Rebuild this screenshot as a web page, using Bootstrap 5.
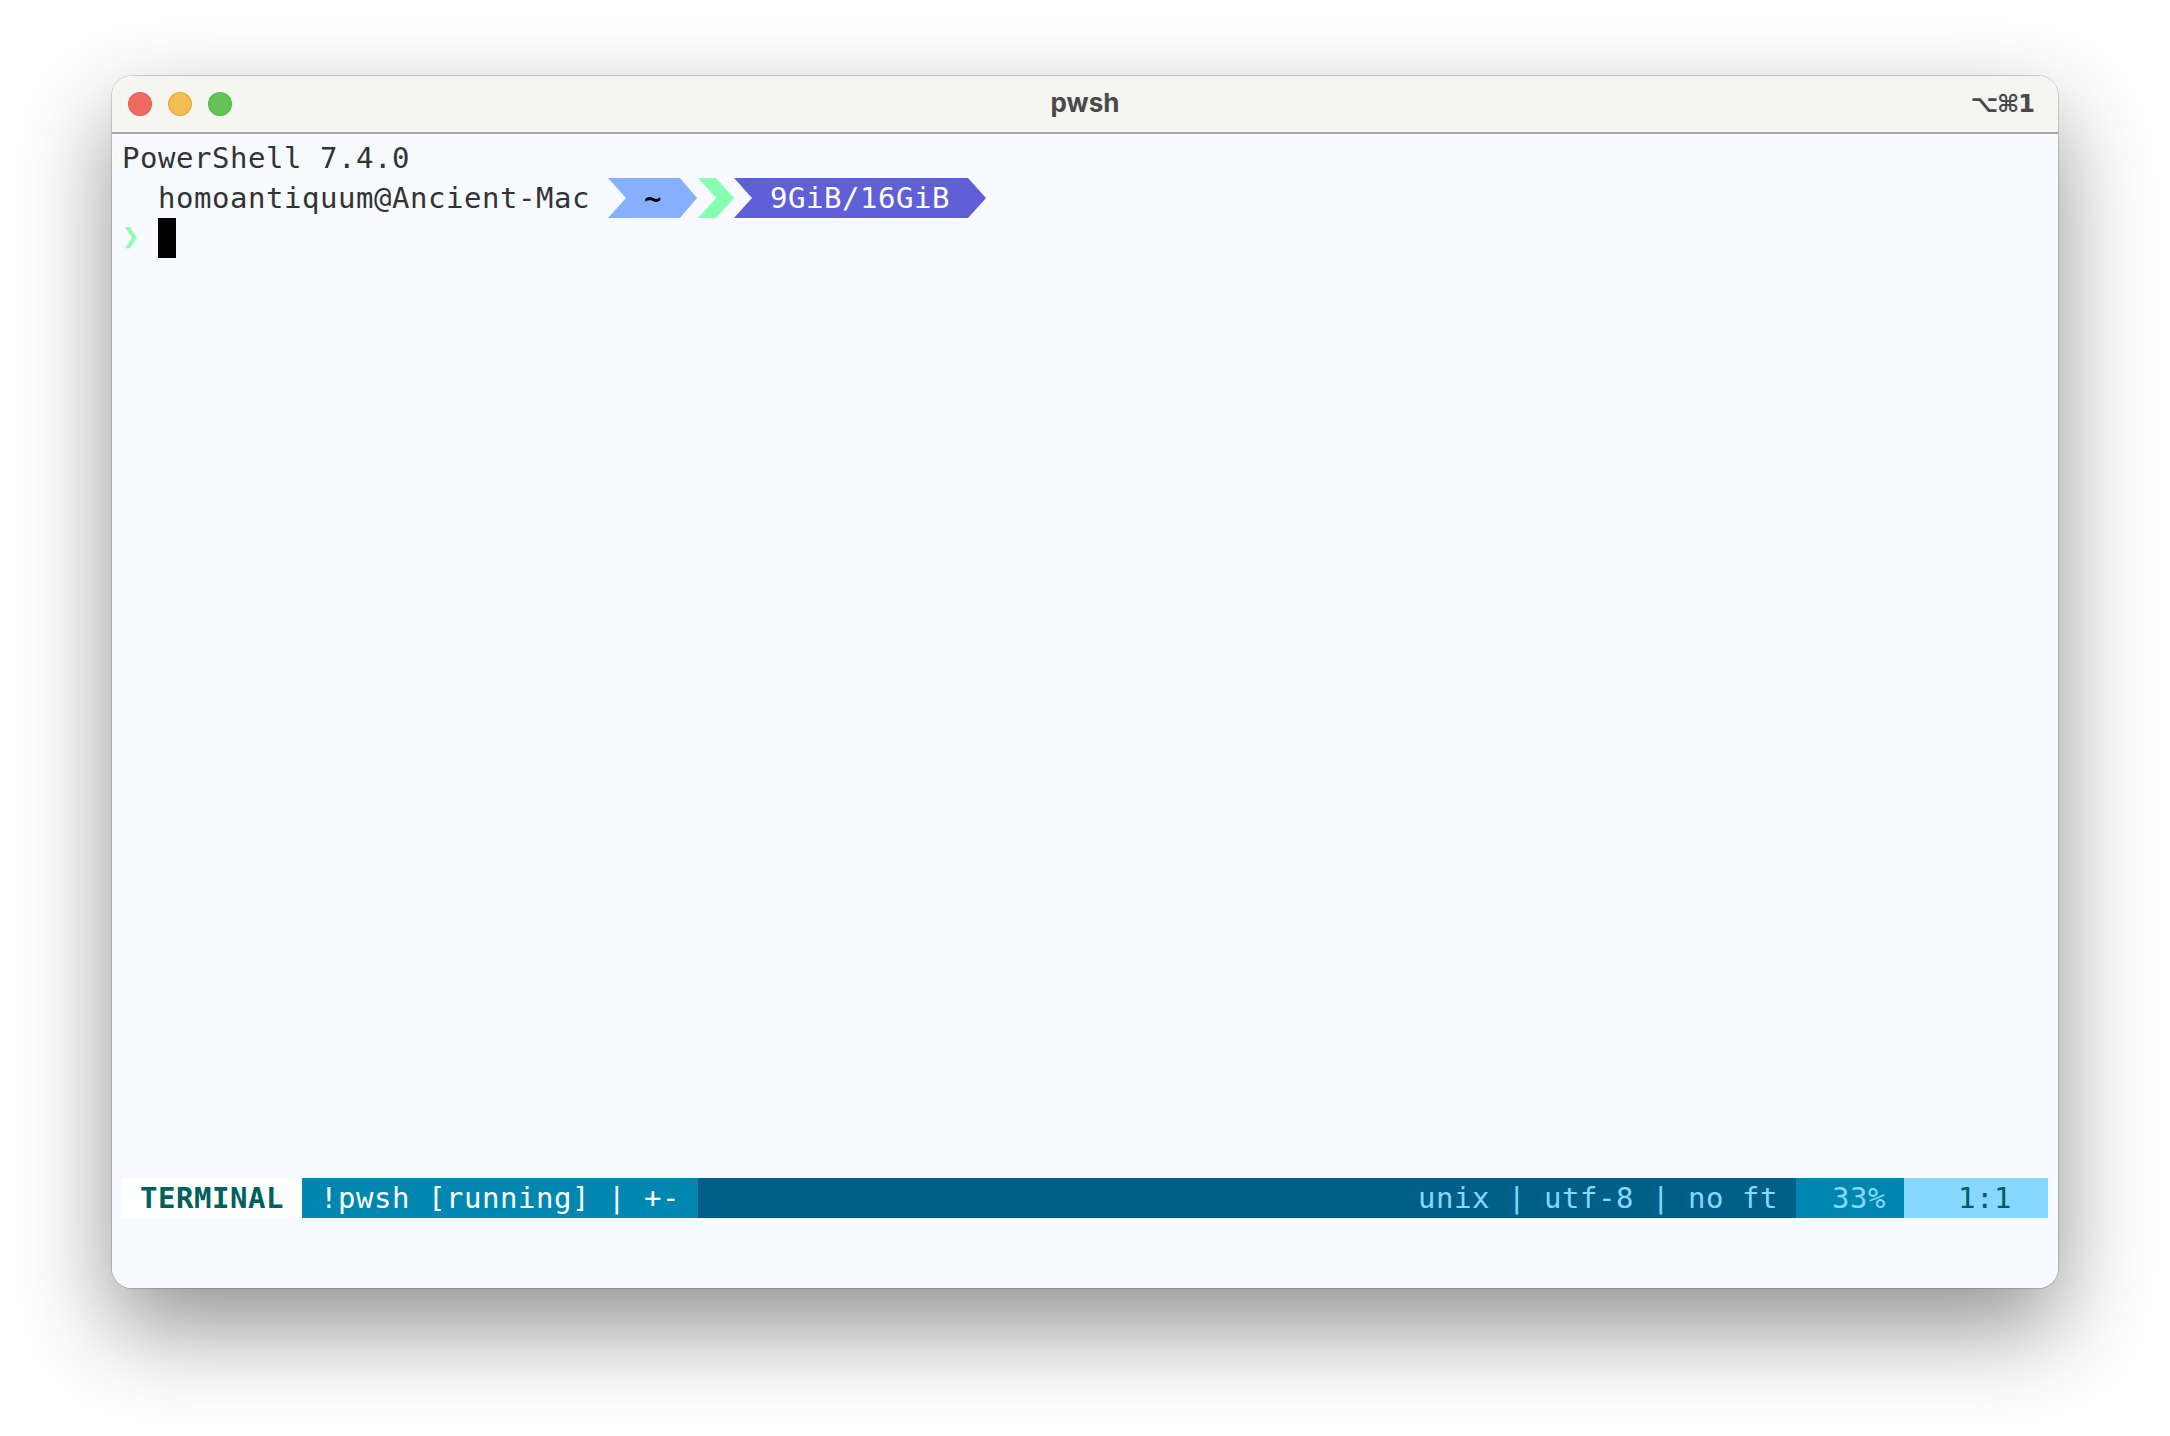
<!DOCTYPE html>
<html lang="en">
<head>
<meta charset="utf-8">
<title>pwsh</title>
<link href="https://cdn.jsdelivr.net/npm/bootstrap@5.3.0/dist/css/bootstrap.min.css" rel="stylesheet">
<style>
html, body { height: 100%; }
body { background: #fff; padding: 76px 112px 148px; overflow: hidden; }
.term-window { height: 1212px; border-radius: 20px; background: #f7faff; overflow: hidden; }
.term-shadow { border-radius: 20px; height: 1212px; box-shadow: 0 0 0 1px rgba(0,0,0,.16), 0 40px 95px rgba(0,0,0,.43); }
.term-title { height: 58px; background: #f5f5f1; border-bottom: 2px solid #a6a6a2; padding: 0 24px 0 16px; font-family: Inter, "DejaVu Sans", sans-serif; color: #4a4a4a; font-weight: 700; position: relative; }
.light { width: 24px; height: 24px; border-radius: 50%; border: 1px solid rgba(0,0,0,.1); }
.light-r { background: #ee6a5f; }
.light-y { background: #f5bd4f; }
.light-g { background: #61c454; }
.title-name { position: absolute; left: 0; right: 0; text-align: center; font-size: 26px; line-height: 58px; top: -2px; }
.title-keys { font-size: 24px; font-family: "DejaVu Sans", sans-serif; font-weight: 700; letter-spacing: -1px; }
.term-body { padding: 4px 10px 70px; height: 1154px; font-family: "DejaVu Sans Mono", monospace; font-size: 29px; letter-spacing: .54px; color: #333; }
.cell-row { height: 40px; line-height: 40px; white-space: pre; }
.seg { height: 40px; flex: none; }
.seg-blue { width: 89px; margin-left: 18px; padding-left: 36px; background: #87afff; color: #000; font-weight: 700; clip-path: polygon(0 0, 72px 0, 100% 50%, 72px 100%, 0 100%, 18px 50%); }
.seg-green { width: 36px; margin-left: 1px; background: #87ffaf; clip-path: polygon(0 0, 18px 0, 100% 50%, 18px 100%, 0 100%, 18px 50%); }
.seg-purple { width: 252px; margin-left: 0; padding-left: 36px; background: #5f5fd7; color: #fff; clip-path: polygon(0 0, 234px 0, 100% 50%, 234px 100%, 0 100%, 18px 50%); }
.prompt { color: #87ffaf; font-weight: 700; line-height: 36px; }
.cursor { width: 18px; height: 40px; background: #000; margin-left: 18px; }
.st { height: 40px; line-height: 40px; white-space: pre; flex: none; }
.st-mode { width: 180px; background: #fff; color: #005f5f; font-weight: 700; }
.st-file { width: 396px; background: #0087af; color: #fff; }
.st-fill { background: #005f87; color: #87d7ff; text-align: right; flex: 1 1 0; }
.st-pct { width: 108px; background: #0087af; color: #87d7ff; }
.st-pos { width: 144px; background: #87d7ff; color: #005f5f; }
</style>
</head>
<body>
<div class="term-shadow">
<div class="term-window d-flex flex-column">
  <div class="term-title d-flex align-items-center">
    <div class="d-flex gap-3"><span class="light light-r"></span><span class="light light-y"></span><span class="light light-g"></span></div>
    <div class="title-name">pwsh</div>
    <div class="title-keys ms-auto">⌥⌘1</div>
  </div>
  <div class="term-body d-flex flex-column">
    <div class="cell-row">PowerShell 7.4.0</div>
    <div class="cell-row d-flex">
      <span>  homoantiquum@Ancient-Mac</span>
      <div class="seg seg-blue">~</div>
      <div class="seg seg-green"></div>
      <div class="seg seg-purple">9GiB/16GiB</div>
    </div>
    <div class="cell-row d-flex"><span class="prompt">❯</span><span class="cursor"></span></div>
    <div class="flex-grow-1"></div>
    <div class="d-flex">
      <div class="st st-mode"> TERMINAL </div>
      <div class="st st-file"> !pwsh [running] | +- </div>
      <div class="st st-fill">unix | utf-8 | no ft </div>
      <div class="st st-pct">  33% </div>
      <div class="st st-pos">   1:1  </div>
    </div>
  </div>
</div>
</div>
</body>
</html>
